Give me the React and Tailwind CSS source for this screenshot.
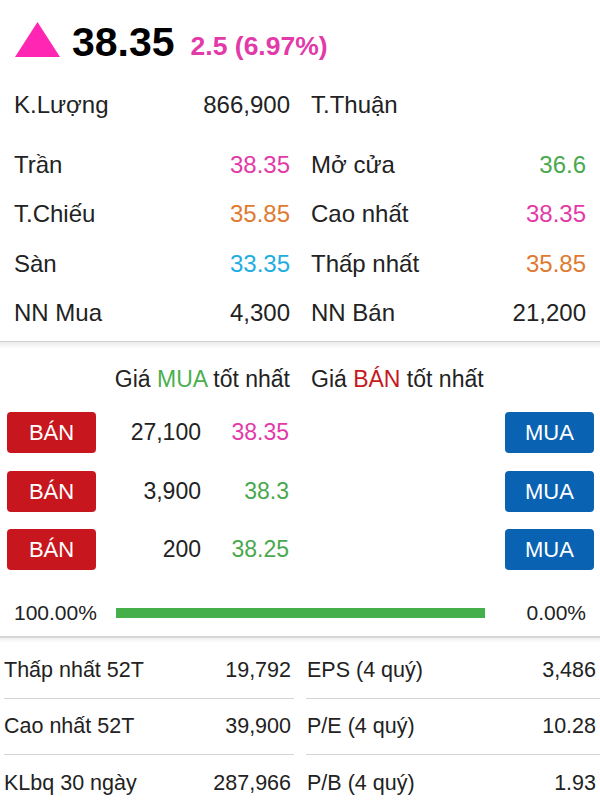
import React from "react";

const PINK = "text-[#e23aa9]";
const ORANGE = "text-[#e07a30]";
const CYAN = "text-[#22ade2]";
const GREEN = "text-[#4aa84e]";

function StatRow({ l1, v1, c1 = "", l2, v2 = "", c2 = "", h = "h-[49.5px]" }) {
  return (
    <div className={`grid grid-cols-[276px_275px] gap-x-[21px] items-center ${h}`}>
      <div className="flex justify-between items-center">
        <span>{l1}</span>
        <span className={c1}>{v1}</span>
      </div>
      <div className="flex justify-between items-center">
        <span>{l2}</span>
        <span className={c2}>{v2}</span>
      </div>
    </div>
  );
}

function OrderRow({ vol, price, pc }) {
  return (
    <div className="flex items-center h-[41px]">
      <div className="ml-[7px] w-[89px] h-[41px] rounded-[4px] bg-[#c8161e] text-white text-[22px] flex items-center justify-center">
        BÁN
      </div>
      <div className="w-[105px] text-right">{vol}</div>
      <div className={`w-[88px] text-right ${pc}`}>{price}</div>
      <div className="ml-auto mr-[6px] w-[89px] h-[41px] rounded-[4px] bg-[#0a62b3] text-white text-[22px] flex items-center justify-center">
        MUA
      </div>
    </div>
  );
}

function BottomRow({ l1, v1, l2, v2, border = true }) {
  return (
    <div className="grid grid-cols-[290px_294px] gap-x-[12px] pl-[4px] h-[56px]">
      <div className={`flex justify-between items-center pr-[3px] ${border ? "border-b border-[#d4d4d4]" : ""}`}>
        <span>{l1}</span>
        <span>{v1}</span>
      </div>
      <div className={`flex justify-between items-center pl-[1px] pr-[4px] ${border ? "border-b border-[#d4d4d4]" : ""}`}>
        <span>{l2}</span>
        <span>{v2}</span>
      </div>
    </div>
  );
}

export default function App() {
  return (
    <div
      className="w-[600px] h-[800px] overflow-hidden bg-white text-[#222]"
      style={{ fontFamily: '"Liberation Sans", Arial, sans-serif' }}
    >
      {/* Header */}
      <div className="h-[80px] flex items-center pl-[15px] pt-[4px]">
        <svg width="45" height="35" viewBox="0 0 45 35" className="mt-[-5px]">
          <polygon points="22.5,0 45,35 0,35" fill="#ff26b4" />
        </svg>
        <span className="ml-[12px] text-[41px] font-bold text-black leading-none">38.35</span>
        <span className={`ml-[16px] mt-[8px] text-[26.5px] font-bold leading-none ${PINK}`}>2.5 (6.97%)</span>
      </div>

      {/* Stats */}
      <div className="px-[14px] text-[24px]">
        <StatRow l1="K.Lượng" v1="866,900" l2="T.Thuận" h="h-[50px]" />
        <div className="h-[10px]" />
        <StatRow l1="Trần" v1="38.35" c1={PINK} l2="Mở cửa" v2="36.6" c2={GREEN} />
        <StatRow l1="T.Chiếu" v1="35.85" c1={ORANGE} l2="Cao nhất" v2="38.35" c2={PINK} />
        <StatRow l1="Sàn" v1="33.35" c1={CYAN} l2="Thấp nhất" v2="35.85" c2={ORANGE} />
        <StatRow l1="NN Mua" v1="4,300" l2="NN Bán" v2="21,200" />
      </div>

      {/* separator */}
      <div className="mt-[3px] h-[1px] bg-[#cfcfcf]" />
      <div className="h-[7px] bg-gradient-to-b from-[#ececec] to-white" />

      {/* Order book */}
      <div className="text-[23px]">
        <div className="mt-[13px] px-[14px] grid grid-cols-[276px_275px] gap-x-[21px] h-[34px] items-center">
          <div className="text-right">
            Giá <span className="text-[#4caf50]">MUA</span> tốt nhất
          </div>
          <div>
            Giá <span className="text-[#c41a1f]">BÁN</span> tốt nhất
          </div>
        </div>
        <div className="mt-[16px] flex flex-col gap-[17.5px]">
          <OrderRow vol="27,100" price="38.35" pc={PINK} />
          <OrderRow vol="3,900" price="38.3" pc={GREEN} />
          <OrderRow vol="200" price="38.25" pc={GREEN} />
        </div>
      </div>

      {/* bar */}
      <div className="mt-[26px] h-[34px] flex items-center px-[14px] text-[21px]">
        <span className="w-[102px]">100.00%</span>
        <div className="w-[369px] h-[10px] bg-[#45b04a]" />
        <span className="ml-auto">0.00%</span>
      </div>

      {/* separator */}
      <div className="mt-[6px] h-[2px] bg-[#d6d6d6]" />
      <div className="h-[5px] bg-gradient-to-b from-[#f0f0f0] to-white" />

      {/* bottom */}
      <div className="text-[21.5px]">
        <BottomRow l1="Thấp nhất 52T" v1="19,792" l2="EPS (4 quý)" v2="3,486" />
        <BottomRow l1="Cao nhất 52T" v1="39,900" l2="P/E (4 quý)" v2="10.28" />
        <BottomRow l1="KLbq 30 ngày" v1="287,966" l2="P/B (4 quý)" v2="1.93" border={false} />
      </div>
    </div>
  );
}
